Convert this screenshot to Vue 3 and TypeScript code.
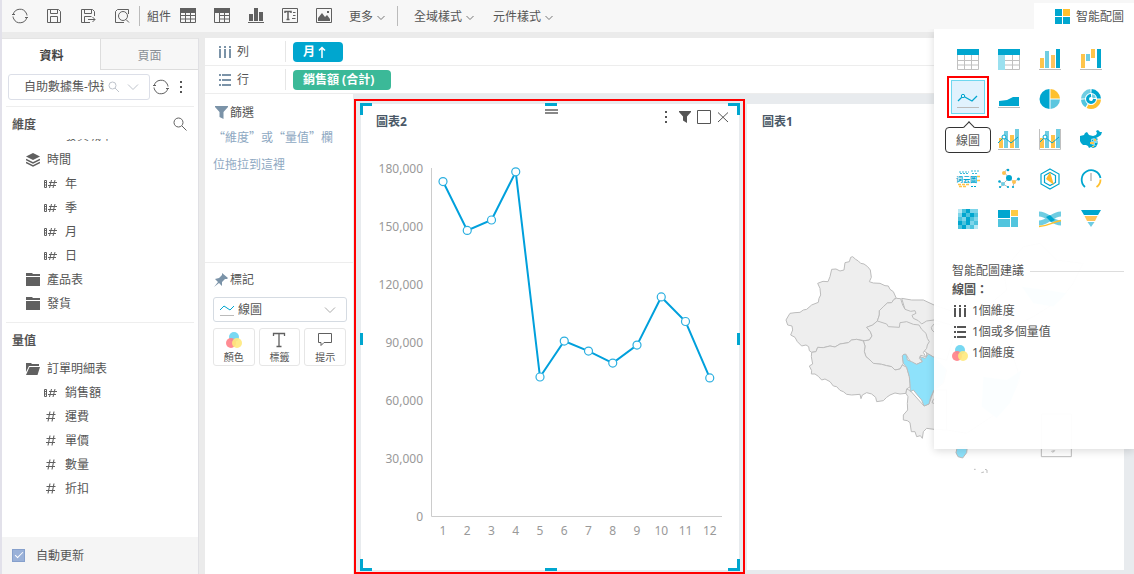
<script setup lang="ts">
import { ref } from 'vue'

interface Field { name: string; kind: 'none' | 'layers' | 'dim' | 'num' | 'folder' | 'open' }
interface ChartType { name: string; body: string }

const autoUpdate = ref(true)
const dataset = ref('自助數據集-快速查詢')
const mark = ref('線圖')
const activeType = ref('線圖')

const dimensions: Field[] = [
  { name: '發貨城市', kind: 'none' },
  { name: '時間', kind: 'layers' },
  { name: '年', kind: 'dim' },
  { name: '季', kind: 'dim' },
  { name: '月', kind: 'dim' },
  { name: '日', kind: 'dim' },
  { name: '產品表', kind: 'folder' },
  { name: '發貨', kind: 'folder' },
]
const measures: Field[] = [
  { name: '訂單明細表', kind: 'open' },
  { name: '銷售額', kind: 'dim' },
  { name: '運費', kind: 'num' },
  { name: '單價', kind: 'num' },
  { name: '數量', kind: 'num' },
  { name: '折扣', kind: 'num' },
]
const isGroup = (f: Field) => ['layers', 'folder', 'open'].includes(f.kind)

const tools = [
  { label: '重新整理', body: '<path d="M2.200 7.500a7 7 0 0 1 13-1.500M15.800 10.500a7 7 0 0 1-13 1.500M2 9.500a7 7 0 0 0 .8 2.500M16 8.500a7 7 0 0 0-.8-2.500"/><path d="M1 7.500h3M14 10.500h3"/>' },
  { label: '儲存', body: '<path d="M2.500 2.500h11l2 2v11h-13zM5.500 2.500v4h7v-4M5.500 15.500v-6h7v6"/>' },
  { label: '另存', body: '<path d="M15.500 9V4.500l-2-2h-11v13H11M5.500 2.500v4h7v-4M5.500 15.500v-6h7M9 12.500h7M13.500 10l2.500 2.500-2.500 2.500"/>' },
  { label: '預覽', body: '<path d="M5 15.500H2.500v-11l2-2h11V7M5 15.500h6"/><circle cx="10" cy="9" r="4.500"/><path d="M13 12.500l3 3"/>' },
]
const widgets = [
  { label: '表格', body: '<path d="M1.500 1.500h15v14h-15zM1.500 8.500h15M1.500 12h15M6.500 5v10.500M11.500 5v10.500"/><path d="M1 1h16v5H1z" fill="#606060" stroke="none"/>' },
  { label: '交叉表', body: '<path d="M1.500 1.500h15v14h-15zM6 8.500h10.500M6 12h10.500M6.500 5v10.500M11.500 5v10.500"/><path d="M1 1h16v5H1z" fill="#606060" stroke="none"/>' },
  { label: '圖表', body: '<path d="M2 7h4v7H2zM7 1h4v13H7zM12 5h4v9h-4zM1 15h16v1H1z" fill="#606060" stroke="none"/>' },
  { label: '文字', body: '<path d="M1.500 1.500h15v14h-15z"/><path d="M4 6V4.500h6V6M7 4.500v8M5.500 12.500h3" stroke-width="1.500"/><path d="M12 5.500h2.500M12 8.500h2.500M11 11.500h3.500"/>' },
  { label: '圖片', body: '<path d="M1.500 1.500h15v14h-15z"/><path d="M3 14v-3l4-5 3 4 2-2 3 4v2zM12 4h2v2h-2z" fill="#606060" stroke="none"/>' },
]

const bars = '<path d="M1 10h4v10H1z" fill="#fec44a"/><path d="M6 3h4v17H6z" fill="#6fcde2"/><path d="M12 7h4v13h-4z" fill="#fec44a"/><path d="M17 1h4v19h-4z" fill="#6fcde2"/>'
const comboLine = '<path d="M0 15l6-6 7 6 7-6" fill="none" stroke="#00a6cf"/><circle cx="6" cy="9" r="2" fill="#fff" stroke="#00a6cf"/>'
const base = '<path d="M0 21h22v1H0z" fill="#bbb"/>'
const heatTones = ['#b5e8f4', '#7dd5ea', '#4cc3dd', '#00a6cf']
const heatCells = [[0, 2, 3, 1, 1], [1, 3, 2, 3, 2], [2, 1, 3, 2, 1], [3, 2, 3, 1, 2], [2, 3, 1, 2, 0]]
const heat = heatCells
  .map((row, r) => row.map((t, c) => `<path d="M${1 + c * 4} ${1 + r * 4}h4v4h-4z" fill="${heatTones[t]}" shape-rendering="crispEdges"/>`).join(''))
  .join('')

const chartTypes: (ChartType | null)[] = [
  { name: '表格', body: '<path d="M.5 7v14.500h21V7M0 12.500h22M0 17h22M7.500 7v15M14.500 7v15" fill="none" stroke="#c0c0c0"/><path d="M0 1h22v6H0z" fill="#00a6cf"/>' },
  { name: '交叉表', body: '<path d="M7 21.500h14.500V7M7 12.500h15M7 17h15M14.500 7v15" fill="none" stroke="#c0c0c0"/><path d="M0 7h7v15H0z" fill="#9ae0ef"/><path d="M0 1h22v6H0z" fill="#00a6cf"/>' },
  { name: '柱狀圖', body: '<path d="M1 10h4v10H1z" fill="#fec44a"/><path d="M6 3h4v17H6z" fill="#6fcde2"/><path d="M12 7h4v13h-4z" fill="#fec35c"/><path d="M17 1h4v19h-4z" fill="#00a6cf"/><path d="M0 21h22v1H0z" fill="#bbb"/>' },
  { name: '瀑布圖', body: '<path d="M1 6h4v14H1zM11 1h4v9h-4z" fill="#fec44a"/><path d="M6 6h4v7H6z" fill="#6fcde2"/><path d="M17 1h4v19h-4z" fill="#00a6cf"/><path d="M0 21h22v1H0z" fill="#bbb"/>' },
  { name: '線圖', body: '<path d="M1 15l5-5 9 5 5-5" fill="none" stroke="#00a6cf" stroke-width="1.300"/><circle cx="6" cy="10" r="1.700" fill="#e1f2fd" stroke="#00a6cf"/><path d="M0 21h22v1H0z" fill="#bbb"/>' },
  { name: '面積圖', body: '<path d="M1 18v-5l8-1 6-3h6v9z" fill="#00a6cf"/><path d="M0 19h22v1H0z" fill="#bbb"/>' },
  { name: '圓餅圖', body: '<path d="M10.500 1v20a10 10 0 0 1 0-20z" fill="#00a6cf"/><path d="M11.500 1v9.500H21A10 10 0 0 0 11.500 1z" fill="#ffc02e"/><path d="M11.500 11.500H21a10 10 0 0 1-9.500 9.500z" fill="#5bc6df"/>' },
  { name: '環圖', body: '<g fill="none" stroke-width="4"><path d="M3 10.500a8 8 0 0 1 7.500-7.500" stroke="#6fcde2"/><path d="M11.500 3a8 8 0 0 1 7.500 7.500" stroke="#00a6cf"/><path d="M19 11.500a8 8 0 0 1-11.500 6.700" stroke="#ffc02e"/><path d="M6.500 17.600A8 8 0 0 1 3 11.500" stroke="#52c5de"/><path d="M11 7.500a3.500 3.500 0 1 0 3.500 3.500" stroke="#00a6cf" stroke-width="3"/><path d="M12 7.500a3.500 3.500 0 0 1 2.500 2.500" stroke="#6fcde2" stroke-width="3"/></g>' },
  null,
  { name: '組合圖', body: bars + comboLine + base },
  { name: '雙軸圖', body: bars + comboLine + '<path d="M.5 1v20.500h21V1" fill="none" stroke="#c0c0c0"/>' },
  { name: '地圖', body: '<path d="M0 8l4-1 1-2 2-1 2 3 4 1 3-1 1-2-1-2 2-1 2 2 2 0-1 3-3 2-2 1 2 1-1 1 1 3-2 4-3 1-2-1-2 1-1-2-2-1-3 0-2-2-1-2z" fill="#00a6cf"/><path d="M11 11l3-1 2 1 2 3-1 3-3 1-3-2z" fill="#8bd8ea"/><path d="M10 14h4v2h-4zM14 11h2v2h-2zM12 18h2v1h-2z" fill="#fec44a"/><path d="M12 12h1v1h-1zM15 15h2v2h-2z" fill="#00a6cf"/>' },
  { name: '詞雲', body: '<path d="M2 4h10M14 3h8M3 5.500h8M15 5.500h6" stroke="#3bbcd9" stroke-width="1" stroke-dasharray="2 1"/><text x="-1" y="14" font-size="7" font-weight="700" fill="#00a6cf">词云圖</text><path d="M20 8.500h4M20 12.500h4M1 16.500h11M2 18.500h8" stroke="#fec44a" stroke-width="1.300" stroke-dasharray="3 1"/><path d="M14 18.500h6" stroke="#00a6cf" stroke-dasharray="2 1"/>' },
  { name: '關係圖', body: '<path d="M6 4l5 6 5 4 4-3M11 10l-6 6-3 4M9 1L6 5M16 14l-1 5M1 13l4 3 5 3" fill="none" stroke="#bbb"/><g fill="#00a6cf"><circle cx="11" cy="10" r="3"/><circle cx="10" cy="2" r="1.300"/><circle cx="20.500" cy="11" r="1.500"/><circle cx="1.500" cy="13.500" r="1.300"/><circle cx="15" cy="19" r="1.100"/><circle cx="2" cy="19" r="1.100"/><circle cx="10" cy="19" r="1.100"/></g><g fill="#ffc14e"><circle cx="6" cy="5" r="2"/><circle cx="16" cy="14" r="2"/></g><circle cx="5" cy="16" r="2" fill="#6fcde2"/>' },
  { name: '雷達圖', body: '<path d="M11 1l9 5v10l-9 5-9-5V6zM11 4.500l5.500 3v7L11 17.500l-5.500-3v-7z" fill="none" stroke="#00a6cf" stroke-width="1.200"/><path d="M11 4l4 13-8-6z" fill="#ffb92e"/>' },
  { name: '儀表板', body: '<g fill="none" stroke-width="1.800"><path d="M5 19A9.500 9.500 0 1 1 20.500 10" stroke="#00a6cf"/><path d="M20.500 11.500a9 9 0 0 1-4 7.500" stroke="#ffc02e"/><path d="M11 5v8" stroke="#c4c4c4"/></g>' },
  { name: '熱力圖', body: heat },
  { name: '矩形樹圖', body: '<path d="M0 2h12v8H0z" fill="#00a6cf"/><path d="M13 2h7v6h-7z" fill="#ffcb45"/><path d="M0 11h12v8H0zM13 9h7v10h-7z" fill="#52c5de"/>' },
  { name: '桑基圖', body: '<path d="M0 6c9 0 13 9 22 9" fill="none" stroke="#6fcde2" stroke-width="5"/><path d="M0 15c9 0 13-9 22-9" fill="none" stroke="#6fcde2" stroke-width="5"/><path d="M7 9l4-2 5 5-4 2z" fill="#00a6cf"/><path d="M0 18.500c9 0 12-4 22-6" fill="none" stroke="#ffc02e" stroke-width="1.300"/>' },
  { name: '漏斗圖', body: '<path d="M1 2h20l-3 5H4z" fill="#00a6cf"/><path d="M4.500 8h13l-2.500 5H7z" fill="#ffc35c"/><path d="M7.500 14h7l-3.500 5z" fill="#6fcde2"/>' },
]

const sales = [173000, 147700, 153100, 178000, 71900, 90500, 85300, 79100, 88400, 113300, 100600, 71400]
const ticks = [180000, 150000, 120000, 90000, 60000, 30000, 0]
const yOf = (v: number) => 376 - (v / 180000) * 348
const points = sales.map((v, i) => ({ x: 82 + i * 24.25, y: yOf(v) }))
const line = points.map(p => `${p.x},${p.y}`).join(' ')
</script>

<template>
  <div class="app">
    <header class="toolbar">
      <button v-for="t in tools" :key="t.label" class="tool" :aria-label="t.label">
        <svg class="ico" viewBox="0 0 18 18" v-html="t.body"></svg>
      </button>
      <i class="bar-sep"></i>
      <span class="group-label">組件</span>
      <button v-for="t in widgets" :key="t.label" class="tool" :aria-label="t.label">
        <svg class="ico" viewBox="0 0 18 18" v-html="t.body"></svg>
      </button>
      <button class="drop more">更多<svg class="caret" viewBox="0 0 8 8"><path d="M.5 3L4 6.500 7.500 3" /></svg></button>
      <i class="bar-sep"></i>
      <button class="drop">全域樣式<svg class="caret" viewBox="0 0 8 8"><path d="M.5 3L4 6.500 7.500 3" /></svg></button>
      <button class="drop">元件樣式<svg class="caret" viewBox="0 0 8 8"><path d="M.5 3L4 6.500 7.500 3" /></svg></button>
      <button class="smart">
        <svg viewBox="0 0 15 15"><path d="M0 0h7v7H0zM0 8h7v7H0zM8 8h7v7H8z" fill="#00a6cf" /><path d="M8 0h7v7H8z" fill="#ffc02e" /></svg>智能配圖
      </button>
    </header>

    <div class="body">
      <aside class="side">
        <nav class="tabs">
          <button class="tab on">資料</button>
          <button class="tab">頁面</button>
        </nav>
        <div class="source">
          <div class="source-box">
            <select v-model="dataset" aria-label="數據集"><option>自助數據集-快速查詢</option></select>
            <svg class="s-search" viewBox="0 0 12 12"><circle cx="4.500" cy="4.500" r="3.500" /><path d="M7 7l4 4" /></svg>
            <svg class="s-caret" viewBox="0 0 12 12"><path d="M1 3.500l5 5 5-5" /></svg>
          </div>
          <button class="mini" aria-label="重新整理"><svg viewBox="0 0 18 18" v-html="tools[0].body"></svg></button>
          <button class="mini dots" aria-label="更多"><i></i><i></i><i></i></button>
        </div>
        <div class="sec-head">
          <h2>維度</h2>
          <button class="find" aria-label="搜尋"><svg viewBox="0 0 14 14"><circle cx="5.500" cy="5.500" r="4.500" /><path d="M9 9l4.500 4.500" /></svg></button>
        </div>
        <div class="tree dims">
          <ul>
            <li v-for="f in dimensions" :key="f.name" :class="{ group: isGroup(f) }">
              <svg v-if="f.kind === 'layers'" class="f-ico" viewBox="0 0 14 14"><path d="M7 0l7 3.500L7 7 0 3.500z" fill="#606060" /><path d="M0 6.500L7 10l7-3.500M0 9.500L7 13l7-3.500" fill="none" stroke="#606060" stroke-width="1.500" /></svg>
              <svg v-else-if="f.kind === 'folder'" class="f-ico" viewBox="0 0 14 14"><path d="M0 0h6l1 1h7v2H0zM0 4h14v9H0z" fill="#606060" /></svg>
              <svg v-else-if="f.kind === 'dim'" class="f-ico" viewBox="0 0 14 14"><path d="M1.500 3.500h2v7h-2zM1 5.500h3M1 8h3M6 5.500h8M5 8.500h8M8.500 3L6.500 11M12 3l-2 8" fill="none" stroke="#606060" /></svg>
              <i v-else class="f-ico"></i>
              <span>{{ f.name }}</span>
            </li>
          </ul>
        </div>
        <div class="sec-head measures-head"><h2>量值</h2></div>
        <div class="tree meas">
          <ul>
            <li v-for="f in measures" :key="f.name" :class="{ group: isGroup(f) }">
              <svg v-if="f.kind === 'open'" class="f-ico" viewBox="0 0 14 14"><path d="M0 1h5l1 1h7v2H3L0 10zM3.500 5H14l-2.500 8H0z" fill="#606060" /></svg>
              <svg v-else-if="f.kind === 'dim'" class="f-ico" viewBox="0 0 14 14"><path d="M1.500 3.500h2v7h-2zM1 5.500h3M1 8h3M6 5.500h8M5 8.500h8M8.500 3L6.500 11M12 3l-2 8" fill="none" stroke="#606060" /></svg>
              <svg v-else class="f-ico" viewBox="0 0 14 14"><path d="M3.500 4.500h9M3 8.500h9M7 1.500l-2 10M11 1.500l-2 10" fill="none" stroke="#606060" stroke-width="1.100" /></svg>
              <span>{{ f.name }}</span>
            </li>
          </ul>
        </div>
        <footer class="auto"><label><input v-model="autoUpdate" type="checkbox" />自動更新</label></footer>
      </aside>

      <main class="main">
        <div class="shelf">
          <div class="shelf-name">
            <svg viewBox="0 0 14 14"><path d="M1 1h2v2H1zM6 1h2v2H6zM11 1h2v2h-2zM1 4h2v9H1zM6 4h2v9H6zM11 4h2v9h-2z" /></svg>列
          </div>
          <button class="chip blue">月<svg viewBox="0 0 8 12"><path d="M4 12V1.500M1 4.500l3-3 3 3" /></svg></button>
        </div>
        <div class="shelf">
          <div class="shelf-name">
            <svg viewBox="0 0 14 14"><path d="M1 1h2v2H1zM4 1h9v2H4zM1 6h2v2H1zM4 6h9v2H4zM1 11h2v2H1zM4 11h9v2H4z" /></svg>行
          </div>
          <button class="chip green">銷售額 (合計)</button>
        </div>

        <div class="work">
          <section class="config">
            <div class="filters">
              <h3><svg viewBox="0 0 14 14"><path d="M0 0h13v1L8.500 6v7l-4-2V6L0 1z" /></svg>篩選</h3>
              <p>“維度”或“量值”欄位拖拉到這裡</p>
            </div>
            <div class="marks">
              <h3><svg viewBox="0 0 14 14"><path d="M8 0l6 5-1 1h-2l-3 3v4l-3-3-5 4 4-5-3-3 4-1 3-3z" /></svg>標記</h3>
              <div class="mark-box">
                <select v-model="mark" aria-label="標記類型"><option>線圖</option></select>
                <svg class="m-line" viewBox="0 0 14 12"><path d="M0 6l4-4 6 4 4-4" stroke="#00a6cf" /><path d="M0 11.500h14" stroke="#bbb" /></svg>
                <svg class="m-caret" viewBox="0 0 12 12"><path d="M1 3.500l5 5 5-5" /></svg>
              </div>
              <div class="mark-btns">
                <button><svg viewBox="0 0 18 18"><circle cx="9" cy="6" r="5" fill="#77d8f2" /><circle cx="6" cy="12" r="5" fill="#ff8087" fill-opacity=".9" /><circle cx="12" cy="12" r="5" fill="#ffe97c" fill-opacity=".9" /></svg>顏色</button>
                <button><svg viewBox="0 0 18 18"><path d="M3.500 5V2.500h11V5M9 2.500v13M6.500 15.500h5" fill="none" stroke="#606060" stroke-width="1.300" /></svg>標籤</button>
                <button><svg viewBox="0 0 18 18"><path d="M2.500 2.500h13v9H8l-3 3v-3H2.500z" fill="none" stroke="#606060" /></svg>提示</button>
              </div>
            </div>
          </section>

          <section class="canvas">
            <div class="frame">
              <article class="panel selected">
                <i class="h tl"></i><i class="h tr"></i><i class="h bl"></i><i class="h br"></i>
                <i class="h top"></i><i class="h bottom"></i><i class="h left"></i><i class="h right"></i>
                <i class="grip"></i>
                <header>
                  <h1>圖表2</h1>
                  <div class="ops">
                    <button aria-label="選單"><svg viewBox="0 0 15 15"><path d="M6 2h2v2H6zM6 7h2v2H6zM6 12h2v2H6z" fill="#555" /></svg></button>
                    <button aria-label="篩選"><svg viewBox="0 0 15 15"><path d="M1 2h12v1L9 7.500V14l-4-2.500v-4L1 3z" fill="#555" /></svg></button>
                    <button aria-label="最大化"><svg viewBox="0 0 15 15"><path d="M.5 1.500h13v13H.5z" fill="none" stroke="#555" /></svg></button>
                    <button aria-label="關閉"><svg viewBox="0 0 15 15"><path d="M2 3.500l10 9.500M12 3.500L2 13" fill="none" stroke="#555" /></svg></button>
                  </div>
                </header>
                <svg class="plot" viewBox="0 0 378 430">
                  <path d="M70.500 28v348.500H361" fill="none" stroke="#ccc" />
                  <g class="axis">
                    <text v-for="t in ticks" :key="t" x="62" :y="yOf(t) + 5" text-anchor="end">{{ t.toLocaleString('en-US') }}</text>
                    <text v-for="(p, i) in points" :key="i" :x="p.x" y="395" text-anchor="middle">{{ i + 1 }}</text>
                  </g>
                  <polyline :points="line" fill="none" stroke="#00a0dc" stroke-width="2" />
                  <circle v-for="(p, i) in points" :key="i" :cx="p.x" :cy="p.y" r="4" fill="#fff" stroke="#2bafe0" stroke-width="1.200" />
                </svg>
              </article>
            </div>

            <article class="panel second">
              <header><h1>圖表1</h1></header>
              <svg class="plot" viewBox="0 0 377 430">
                <g transform="translate(-7 100) scale(.33333)" fill="#eee" stroke="#bcbcbc" stroke-width="3" stroke-linejoin="round">
                  <path d="M485 175L515 180 550 180 582 195 640 215 740 200 800 150 790 90 850 20 900 10 950 60 1030 70 1000 130 960 180 880 230 840 250 800 300 830 380 840 420 800 500 740 540 680 580 650 575 620 570 582 568 560 500 560 305 520 245 495 208z" />
                  <path d="M338 50L332 52 328 65 315 68 312 90 300 93 288 87 275 88 270 110 264 125 249 124 233 130 240 145 242 165 237 175 235 187 215 195 200 208 190 210 180 217 165 218 150 220 145 228 138 240 143 255 156 258 158 270 152 285 165 292 172 305 185 318 198 315 206 320 208 332 215 337 228 335 233 322 250 323 270 318 285 321 300 312 325 308 335 300 350 298 373 302 388 300 396 288 391 275 380 262 398 255 412 243 418 225 418 212 430 200 442 189 455 188 462 178 469 175 460 155 450 148 445 138 435 137 420 130 400 129 388 125 394 112 391 90 383 80 372 72 362 70 355 63 347 58z" />
                  <path d="M469 175L482 176 488 195 495 208 512 214 525 212 528 220 516 226 520 235 535 242 545 252 560 243 582 240 650 260 620 360 582 352 565 342 548 330 420 262 412 243 418 225 418 212 430 200 442 189 455 188 462 178z" />
                  <path d="M600 252L582 252 574 262 576 270 586 280" fill="none" />
                  <path d="M412 243L440 252 445 260 478 262 480 248 500 245 520 253 537 255 545 268 558 280 562 295 568 305 562 315 560 325 550 337 557 350 542 346 538 355 547 365 530 373 515 370 505 355 497 342 487 348 490 370 480 387 465 390 455 380 440 377 425 373 400 370 390 360 378 350 373 335 375 318 370 303 388 300 396 288 391 275 380 262 398 255z" />
                  <path d="M215 337L228 335 233 322 250 323 270 318 285 321 300 312 325 308 335 300 350 298 370 303 375 318 373 335 378 350 390 360 400 370 425 373 440 377 455 380 465 390 480 387 487 375 500 382 508 410 511 440 500 447 498 460 480 462 465 459 450 465 440 472 430 482 410 485 407 472 395 462 380 458 367 465 363 476 360 463 335 465 320 463 310 455 300 451 290 440 280 438 270 425 255 417 245 420 235 409 225 402 214 402 215 392 208 378 218 372 214 350z" />
                  <path d="M511 452L500 447 498 460 504 470 502 490 503 510 490 525 490 540 502 542 510 548 514 575 525 575 530 590 541 587 547 595 550 575 560 565 582 568 620 570V450H582L567 492 552 498z" />
                  <path d="M590 475L580 478 576 488 586 492" fill="none" />
                  <path d="M487 348L492 342 500 346 502 360 515 365 530 373 547 365 540 350 556 355 565 342 582 352 620 390 610 430 582 450 572 472 567 492 552 498 545 480 532 465 520 450 511 455 510 430 508 410 500 382 490 370z" fill="#8ee2fb" />
                  <path d="M845 140L920 150 980 160 940 200 880 190zM730 410L800 420 845 390 830 440 810 490 770 535 725 500z" fill="#8ee2fb" stroke="none" />
                  <path d="M652 620L682 620 680 638 668 654 654 650 648 638z" fill="#8ee2fb" />
                  <path d="M904 522h90v128h-90zM934 634l10-2-6 6M702 688h5M724 698l8-2M735 688l6 2v9" fill="none" />
                </g>
              </svg>
            </article>
          </section>
        </div>
      </main>
    </div>

    <section class="popup">
      <div class="types">
        <template v-for="(c, i) in chartTypes" :key="i">
          <div v-if="c" class="cell" :class="{ picked: c.name === activeType }">
            <button :aria-label="c.name" @click="activeType = c.name"><svg viewBox="0 0 22 22" v-html="c.body"></svg></button>
            <span v-if="c.name === activeType" class="tip">{{ c.name }}</span>
          </div>
          <i v-else></i>
        </template>
      </div>
      <div class="advice">
        <h4><span>智能配圖建議</span></h4>
        <h5>線圖：</h5>
        <ul>
          <li><svg viewBox="0 0 16 16"><path d="M2 2h2v2H2zM7 2h2v2H7zM12 2h2v2h-2zM2 5h2v9H2zM7 5h2v9H7zM12 5h2v9h-2z" fill="#555" /></svg>1個維度</li>
          <li><svg viewBox="0 0 16 16"><path d="M2 2h2v2H2zM5 2h9v2H5zM2 7h2v2H2zM5 7h9v2H5zM2 12h2v2H2zM5 12h9v2H5z" fill="#555" /></svg>1個或多個量值</li>
          <li><svg viewBox="0 0 16 16"><circle cx="8" cy="5" r="5" fill="#77d8f2" /><circle cx="5" cy="11" r="5" fill="#ff8087" fill-opacity=".9" /><circle cx="11" cy="11" r="5" fill="#ffe97c" fill-opacity=".9" /></svg>1個維度</li>
        </ul>
      </div>
    </section>
  </div>
</template>

<style>
html, body, #app { height: 100%; margin: 0; }
</style>

<style scoped>
* { box-sizing: border-box; }
.app {
  position: relative; display: flex; flex-direction: column; height: 100vh; overflow: hidden;
  border-left: 2px solid #e2e1ea; background: #ebebeb; color: #555;
  font: 12px/16px "Noto Sans", "Noto Sans CJK TC", sans-serif;
}
button, select, input { font: inherit; color: inherit; margin: 0; }
button { border: 0; padding: 0; background: none; cursor: pointer; }
ul { list-style: none; margin: 0; padding: 0; }
h1, h2, h3, h4, h5, p { margin: 0; font-size: 12px; }
svg { display: block; flex: none; }
select { appearance: none; border: 0; background: none; outline: 0; }

.toolbar { display: flex; align-items: center; height: 32px; flex: none; padding-left: 1px; background: #f7f7f7; }
.tool { display: flex; justify-content: center; width: 34px; flex: none; }
.ico { width: 18px; height: 18px; fill: none; stroke: #606060; }
.bar-sep { width: 1px; height: 20px; flex: none; background: #bbb; }
.group-label { padding-left: 7px; }
.group-label, .drop { padding-top: 1px; }
.drop { display: flex; align-items: center; gap: 4px; padding-left: 16px; margin-right: 3px; white-space: nowrap; }
.more { padding-left: 8px; margin-right: 12px; }
.caret { width: 8px; height: 8px; fill: none; stroke: #777; }
.smart {
  display: flex; align-items: center; justify-content: flex-end; gap: 6px; align-self: flex-end;
  width: 100px; height: 29px; padding: 0 10px 2px 0; margin-left: auto; background: #fff;
}
.smart svg { width: 15px; height: 15px; }

.body { display: flex; flex: 1; min-height: 0; padding-top: 6px; gap: 6px; }
.side { display: flex; flex-direction: column; width: 197px; flex: none; background: #fff; border-right: 1px solid #e0e0e4; border-top: 1px solid #e4e4e4; }
.tabs { display: flex; height: 31px; flex: none; }
.tab { flex: 1; background: #f7f7f7; color: #8a8f96; border-left: 1px solid #ddd; border-bottom: 1px solid #ddd; padding-top: 4px; }
.tab.on { background: #fff; color: #444; font-weight: 700; border-color: transparent; }
.source { display: flex; align-items: center; height: 37px; margin: 0 4px; padding: 0 0 2px 2px; border-bottom: 1px solid #eee; flex: none; }
.source-box { display: flex; align-items: center; width: 142px; height: 26px; padding-left: 15px; border: 1px solid #dcdfe8; border-radius: 3px; }
.source-box select { width: 80px; padding: 0; overflow: hidden; text-overflow: clip; white-space: nowrap; }
.source-box svg { width: 12px; height: 12px; fill: none; stroke: #bfc4cc; }
.s-search { margin-left: 4px; }
.s-caret { margin-left: 7px; }
.mini { margin-left: 2px; }
.mini svg { width: 18px; height: 18px; fill: none; stroke: #606060; }
.dots { display: grid; gap: 3px; margin-left: 10px; }
.dots i { width: 2px; height: 2px; background: #555; }
.sec-head { display: flex; align-items: center; justify-content: space-between; height: 32px; flex: none; padding: 4px 11px 0 10px; }
.sec-head h2 { font-weight: 700; }
.find { padding-bottom: 3px; }
.find svg { width: 14px; height: 14px; fill: none; stroke: #606060; }
.tree { margin: 0 4px; overflow: hidden; flex: none; }
.dims { height: 184px; border-bottom: 1px solid #eee; }
.dims ul { margin-top: -15px; }
.measures-head { height: 34px; padding-top: 2px; }
.tree li { display: flex; align-items: center; gap: 8px; height: 24px; padding-left: 37px; }
.tree li.group { padding-left: 20px; }
.tree li.group span { margin-left: -1px; }
.f-ico { width: 14px; height: 14px; flex: none; }
.auto { margin-top: auto; height: 37px; flex: none; display: flex; align-items: center; padding-left: 10px; background: #f5f5f5; }
.auto label { display: flex; align-items: center; gap: 11px; }
.auto input { appearance: none; display: grid; place-items: center; width: 13px; height: 13px; background: #9ab1d8; border: 1px solid #86a0cc; }
.auto input:checked::after { content: ""; width: 7px; height: 3px; border: solid #fff; border-width: 0 0 1px 1px; rotate: -45deg; margin-bottom: 3px; }

.main { display: flex; flex-direction: column; flex: 1; min-width: 0; }
.shelf { display: flex; align-items: center; height: 28px; flex: none; background: #fff; border-bottom: 1px solid #ededed; }
.shelf-name { display: flex; align-items: center; gap: 5px; width: 81px; height: 21px; padding-left: 13px; border-right: 1px solid #e6e6e6; }
.shelf-name svg { width: 14px; height: 14px; fill: #7b93a8; }
.chip { display: flex; align-items: center; gap: 3px; height: 20px; margin-left: 7px; padding: 0 17px 0 10px; border-radius: 4px; color: #fff; font-weight: 700; white-space: nowrap; }
.chip svg { width: 8px; height: 12px; fill: none; stroke: #fff; stroke-width: 1.5; }
.blue { background: #00a6cf; }
.green { background: #3bb998; }
.work { display: flex; flex: 1; min-height: 0; }
.config { width: 148px; flex: none; background: #fff; }
.config h3 { display: flex; align-items: center; gap: 1px; font-weight: 400; }
.config h3 svg { width: 14px; height: 14px; fill: #7b93a8; }
.filters { height: 169px; padding: 11px 10px 0; border-bottom: 1px solid #ededed; }
.filters h3 { margin-bottom: 2px; }
.filters p { width: 124px; margin-left: -2px; line-height: 27px; color: #8ea8c2; font-family: "Noto Sans CJK SC", "Noto Sans CJK TC", sans-serif; }
.marks { padding: 9px 6px 0 8px; }
.marks h3 { padding-left: 1px; gap: 2px; }
.mark-box { display: flex; align-items: center; position: relative; height: 25px; margin-top: 9px; border: 1px solid #d5dbe2; border-radius: 3px; }
.mark-box select { width: 100%; height: 23px; padding: 0 24px; }
.mark-box svg { position: absolute; height: 12px; fill: none; pointer-events: none; }
.m-line { left: 6px; width: 14px; }
.m-caret { right: 10px; width: 12px; stroke: #aaa; }
.mark-btns { display: grid; grid-template-columns: repeat(3, 1fr); gap: 4px; margin-top: 6px; margin-right: 1px; }
.mark-btns button { display: flex; flex-direction: column; align-items: center; gap: 1px; height: 38px; padding-top: 2px; border: 1px solid #e6e6e6; border-radius: 3px; font-size: 10px; line-height: 14px; }
.mark-btns svg { width: 18px; height: 18px; }

.canvas { display: grid; grid-template-columns: 391fr 377fr; gap: 2px; flex: 1; min-width: 0; padding: 5px 10px 0 1px; background: #e8ebee; }
.frame { min-width: 0; min-height: 0; border: 2px solid #f00; padding: 3px 4px 2px 5px; }
.panel { position: relative; display: flex; flex-direction: column; height: 100%; min-height: 0; min-width: 0; background: #fff; }
.second { height: auto; margin: 5px 0 4px; }
.panel header { display: flex; justify-content: space-between; height: 36px; flex: none; padding: 10px 8px 0 15px; }
.panel h1 { color: #4a5867; font-weight: 700; }
.ops { display: flex; gap: 4px; height: 15px; margin-top: -5px; }
.ops svg { width: 15px; height: 15px; }
.plot { flex: 1; min-height: 0; width: 100%; }
.axis text { fill: #999; font-size: 12px; }
.h { position: absolute; width: 12px; height: 12px; border: 0 solid #00a6cf; }
.tl { left: -1px; top: -1px; border-width: 3px 0 0 3px; }
.tr { right: -1px; top: -1px; border-width: 3px 3px 0 0; }
.bl { left: -1px; bottom: -1px; border-width: 0 0 3px 3px; }
.br { right: -1px; bottom: -1px; border-width: 0 3px 3px 0; }
.top, .bottom { left: calc(50% - 5px); height: 3px; background: #00a6cf; }
.top { top: -1px; }
.bottom { bottom: -1px; }
.left, .right { top: calc(50% - 4px); width: 3px; background: #00a6cf; }
.left { left: -1px; }
.right { right: -1px; }
.grip { position: absolute; top: 5px; left: calc(50% - 5px); width: 13px; height: 5px; border: solid #888; border-width: 2px 0; }

.popup { position: absolute; top: 29px; right: 0; width: 200px; height: 420px; padding: 10px 10px 0 13px; background: rgba(255, 255, 255, .97); box-shadow: 0 2px 8px rgba(0, 0, 0, .14); clip-path: inset(0 0 -12px -12px); }
.types { display: grid; grid-template-columns: repeat(4, 41px); grid-auto-rows: 40px; }
.cell { position: relative; display: grid; place-items: center; }
.cell button { display: grid; place-items: center; width: 34px; height: 34px; border: 1px solid transparent; }
.cell svg { width: 22px; height: 22px; overflow: visible; }
.picked { padding-bottom: 4px; }
.picked button { background: #e1f2fd; border-color: #6fd7ef; outline: 2px solid #f00; outline-offset: 2px; }
.tip { position: absolute; z-index: 2; top: 48px; left: -2px; width: 46px; height: 26px; border: 1px solid #333; border-radius: 4px; background: #fff; text-align: center; line-height: 25px; }
.tip::before { content: ""; position: absolute; top: -5px; left: 19px; width: 7px; height: 7px; border: solid #333; border-width: 1px 0 0 1px; background: #fff; rotate: 45deg; }
.advice { padding: 24px 0 0 5px; }
.advice h4 { display: flex; align-items: center; gap: 6px; font-weight: 400; }
.advice h4::after { content: ""; flex: 1; height: 1px; background: #ddd; }
.advice h5 { margin: 2px 0 1px; line-height: 18px; }
.advice li { display: flex; align-items: center; gap: 4px; height: 21px; }
.advice li svg { width: 16px; height: 16px; }
</style>
